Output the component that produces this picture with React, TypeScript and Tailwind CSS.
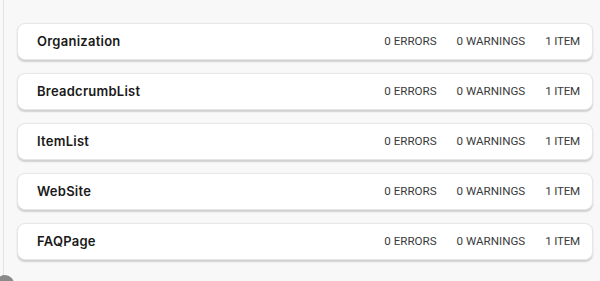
import React from 'react';

const items = ['Organization', 'BreadcrumbList', 'ItemList', 'WebSite', 'FAQPage'];

const App: React.FC = () => {
  return (
    <div className="relative h-[281px] w-[600px] overflow-hidden bg-[#f8f8f8]">
      {/* left edge rule */}
      <div className="absolute left-[3px] top-0 h-full w-px bg-[#e3e3e3]" />

      <div className="flex flex-col gap-[13px] pl-[17px] pr-[7px] pt-[23px]">
        {items.map((name) => (
          <div
            key={name}
            className="flex h-[37px] items-center justify-between rounded-[8px] border border-[#e6e6e6] bg-white pl-[19px] pr-[12px] shadow-[0_1.5px_1.5px_rgba(0,0,0,0.16)]"
          >
            <span className="font-['Inter',sans-serif] text-[13px] font-semibold tracking-[0.25px] text-[#1a1a1a]">{name}</span>
            <div className="flex items-center font-['Roboto',sans-serif] text-[11.6px] text-[#3a3a3a]">
              <span>0 ERRORS</span>
              <span className="ml-[20px]">0 WARNINGS</span>
              <span className="ml-[20px] tracking-[-0.2px]">1 ITEM</span>
            </div>
          </div>
        ))}
      </div>

      {/* partial avatar at bottom-left */}
      <div className="absolute -bottom-[12px] -left-[4px] h-[18px] w-[18px] rounded-full bg-[#8a8a8a]" />
    </div>
  );
};

export default App;
